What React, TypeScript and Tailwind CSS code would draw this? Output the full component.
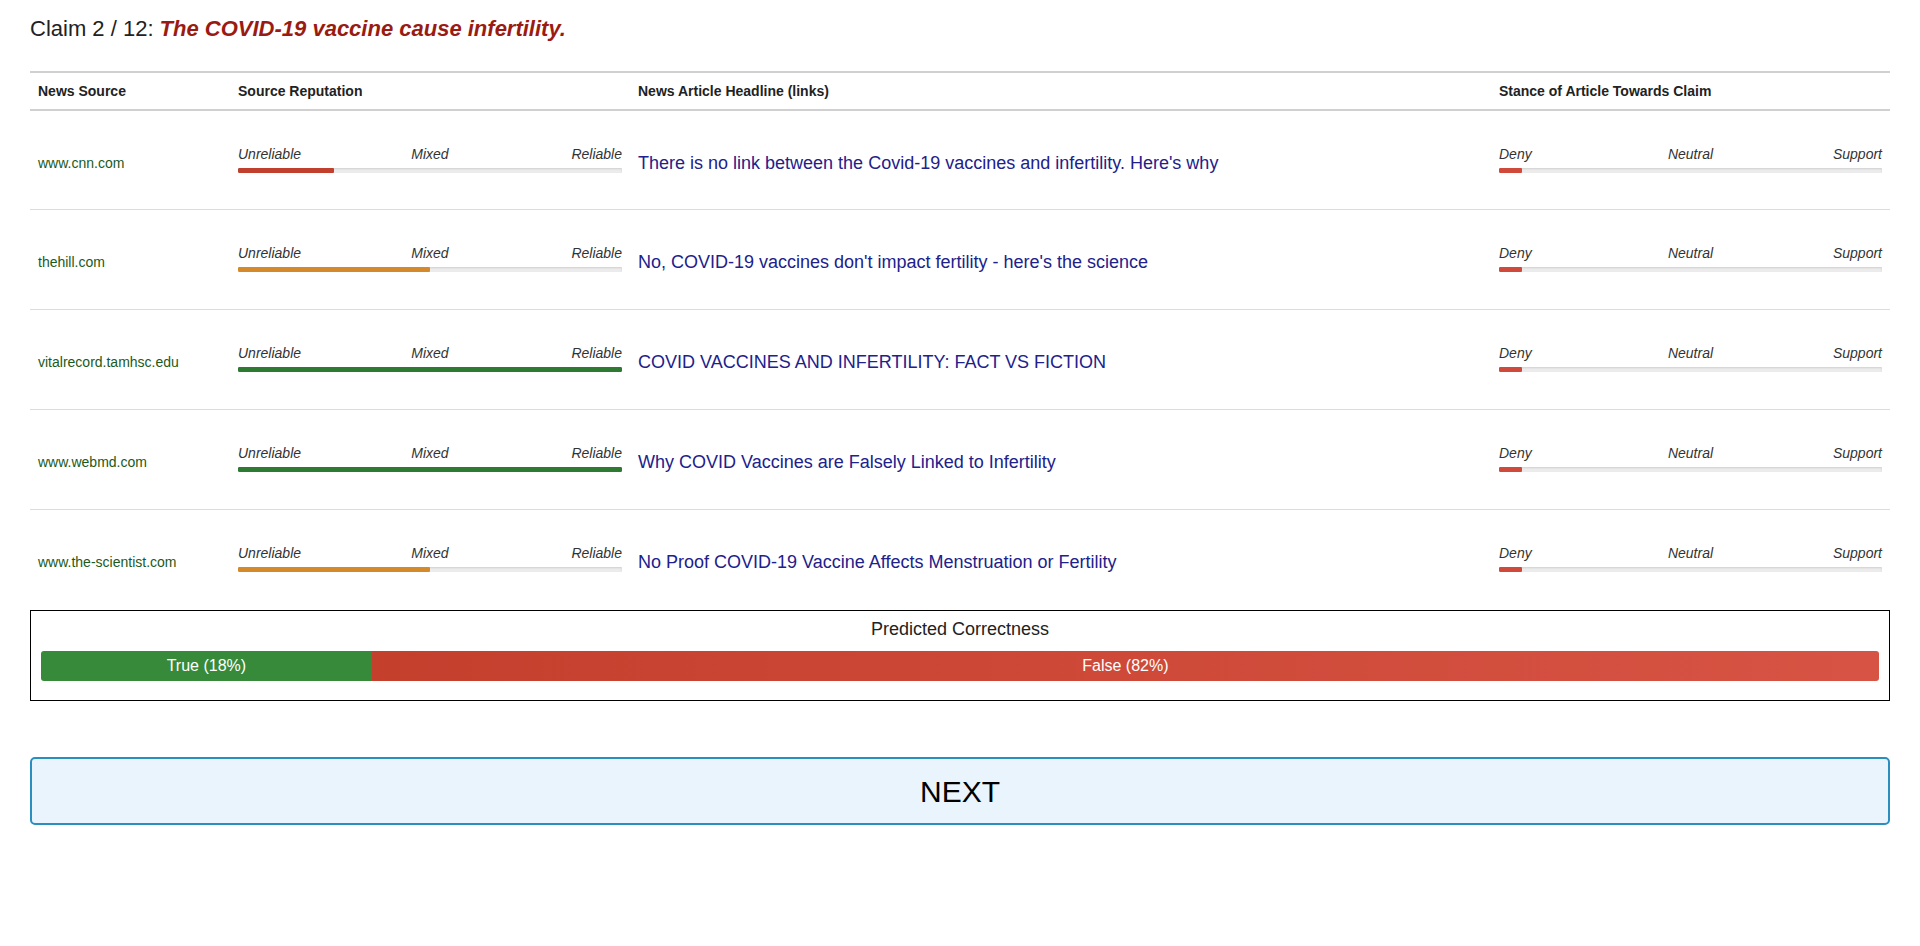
import React from "react";

type Row = {
  source: string;
  rep: number;
  repColor: string;
  headline: string;
  stance: number;
};

const rows: Row[] = [
  { source: "www.cnn.com", rep: 25, repColor: "#c0402d", headline: "There is no link between the Covid-19 vaccines and infertility. Here's why", stance: 6 },
  { source: "thehill.com", rep: 50, repColor: "#d4892b", headline: "No, COVID-19 vaccines don't impact fertility - here's the science", stance: 6 },
  { source: "vitalrecord.tamhsc.edu", rep: 100, repColor: "#2e7a32", headline: "COVID VACCINES AND INFERTILITY: FACT VS FICTION", stance: 6 },
  { source: "www.webmd.com", rep: 100, repColor: "#2e7a32", headline: "Why COVID Vaccines are Falsely Linked to Infertility", stance: 6 },
  { source: "www.the-scientist.com", rep: 50, repColor: "#d4892b", headline: "No Proof COVID-19 Vaccine Affects Menstruation or Fertility", stance: 6 },
];

function Scale({ labels, pct, color }: { labels: [string, string, string]; pct: number; color: string }) {
  return (
    <div className="w-full">
      <div className="grid grid-cols-3 text-[14px] leading-[20px] italic text-[#333]">
        <span className="text-left">{labels[0]}</span>
        <span className="text-center">{labels[1]}</span>
        <span className="text-right">{labels[2]}</span>
      </div>
      <div className="mt-[4px] h-[5px] w-full bg-[#ececec] shadow-[inset_0_1px_2px_rgba(0,0,0,0.12)] rounded-[1px] overflow-hidden">
        <div className="h-full rounded-[1px]" style={{ width: `${pct}%`, backgroundColor: color }} />
      </div>
    </div>
  );
}

export default function App() {
  return (
    <div className="min-h-[946px] bg-white px-[30px] font-['Liberation_Sans',Arial,sans-serif] text-[#333]">
      <div className="pt-[16px] h-[71px] text-[22px] leading-[25px]">
        <span className="text-[#222]">Claim 2 / 12: </span>
        <span className="font-bold italic text-[#9a1b12]">The COVID-19 vaccine cause infertility.</span>
      </div>

      <div className="w-full">
        <div className="flex h-[40px] items-center border-y-2 border-[#d0d0d0] text-[14px] font-bold text-[#222]">
          <div className="w-[200px] px-2">News Source</div>
          <div className="w-[400px] px-2">Source Reputation</div>
          <div className="w-[861px] px-2">News Article Headline (links)</div>
          <div className="w-[399px] px-2">Stance of Article Towards Claim</div>
        </div>
        {rows.map((r, i) => (
          <div
            key={r.source}
            className={`flex items-start ${i === 0 ? "h-[99px]" : "h-[100px]"} ${i < rows.length - 1 ? "border-b border-[#dcdcdc]" : ""}`}
          >
            <div className="w-[200px] px-2 pt-[43px] text-[14px] leading-[18px] text-[#1b5a1b]">{r.source}</div>
            <div className="w-[400px] px-2 pt-[33px]">
              <Scale labels={["Unreliable", "Mixed", "Reliable"]} pct={r.rep} color={r.repColor} />
            </div>
            <div className="w-[861px] px-2 pt-[41px] text-[18px] leading-[22px] text-[#21218c]">
              <a href="#" className="text-[#21218c] no-underline">{r.headline}</a>
            </div>
            <div className="w-[399px] px-2 pt-[33px]">
              <Scale labels={["Deny", "Neutral", "Support"]} pct={r.stance} color="#cf4a3a" />
            </div>
          </div>
        ))}
      </div>

      <div className="border border-black px-[10px] pt-[8px] pb-[19px]">
        <div className="text-center text-[18px] leading-[21px] text-[#222]">Predicted Correctness</div>
        <div className="mt-[11px] flex h-[30px] w-full overflow-hidden rounded-[3px] text-[16px] text-white">
          <div className="flex items-center justify-center bg-[#378a3a]" style={{ width: "18%" }}>
            True (18%)
          </div>
          <div
            className="flex items-center justify-center bg-gradient-to-r from-[#c53f2d] to-[#d75343]"
            style={{ width: "82%" }}
          >
            False (82%)
          </div>
        </div>
      </div>

      <button className="mt-[56px] flex h-[68px] w-full items-center justify-center rounded-[5px] border-2 border-[#2a8fc0] bg-[#eaf4fc] text-[30px] text-black">
        NEXT
      </button>
    </div>
  );
}
